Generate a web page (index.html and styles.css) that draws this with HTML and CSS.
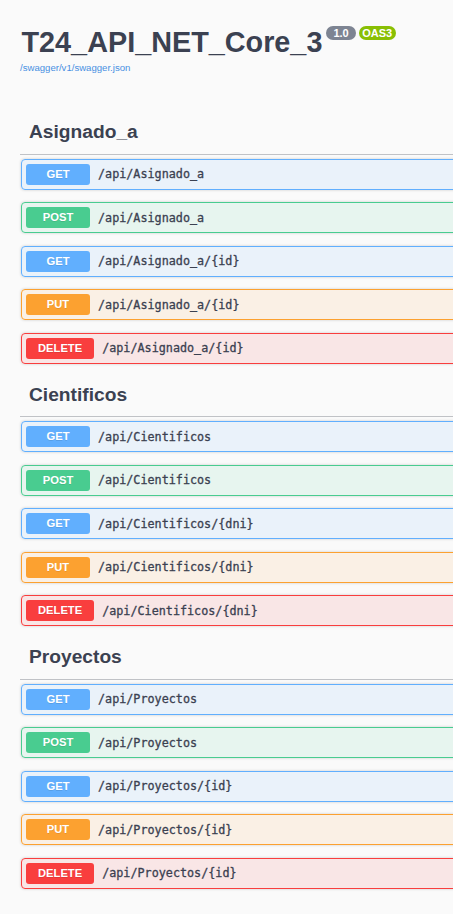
FILE: index.html
```html
<!DOCTYPE html>
<html lang="es">
<head>
<meta charset="utf-8">
<title>Swagger UI</title>
<link rel="stylesheet" href="styles.css">
</head>
<body>
<div class="wrapper">
  <div class="info">
    <h2 class="title">
      <span class="title-text">T24_API_NET_Core_3</span>
      <span class="pill pill-version">1.0</span>
      <span class="pill pill-oas">OAS3</span>
    </h2>
    <a class="url" href="#">/swagger/v1/swagger.json</a>
  </div>

  <section class="tag-section">
    <h3 class="tag">Asignado_a</h3>
    <div class="opblock get"><span class="method">GET</span><span class="path">/api/Asignado_a</span></div>
    <div class="opblock post"><span class="method">POST</span><span class="path">/api/Asignado_a</span></div>
    <div class="opblock get"><span class="method">GET</span><span class="path">/api/Asignado_a/{id}</span></div>
    <div class="opblock put"><span class="method">PUT</span><span class="path">/api/Asignado_a/{id}</span></div>
    <div class="opblock delete"><span class="method">DELETE</span><span class="path">/api/Asignado_a/{id}</span></div>
  </section>

  <section class="tag-section">
    <h3 class="tag">Cientificos</h3>
    <div class="opblock get"><span class="method">GET</span><span class="path">/api/Cientificos</span></div>
    <div class="opblock post"><span class="method">POST</span><span class="path">/api/Cientificos</span></div>
    <div class="opblock get"><span class="method">GET</span><span class="path">/api/Cientificos/{dni}</span></div>
    <div class="opblock put"><span class="method">PUT</span><span class="path">/api/Cientificos/{dni}</span></div>
    <div class="opblock delete"><span class="method">DELETE</span><span class="path">/api/Cientificos/{dni}</span></div>
  </section>

  <section class="tag-section">
    <h3 class="tag">Proyectos</h3>
    <div class="opblock get"><span class="method">GET</span><span class="path">/api/Proyectos</span></div>
    <div class="opblock post"><span class="method">POST</span><span class="path">/api/Proyectos</span></div>
    <div class="opblock get"><span class="method">GET</span><span class="path">/api/Proyectos/{id}</span></div>
    <div class="opblock put"><span class="method">PUT</span><span class="path">/api/Proyectos/{id}</span></div>
    <div class="opblock delete"><span class="method">DELETE</span><span class="path">/api/Proyectos/{id}</span></div>
  </section>
</div>
</body>
</html>
```

FILE: styles.css
```css
html, body {
  margin: 0;
  padding: 0;
  background: #fafafa;
  overflow: hidden;
}

body {
  font-family: "Liberation Sans", Arial, sans-serif;
  color: #3b4151;
}

.wrapper {
  width: 520px;
  padding: 0 0 0 20px;
}

.info {
  padding-top: 25px;
}

.title {
  display: flex;
  align-items: flex-start;
  margin: 0;
  padding-left: 1.5px;
  font-size: 28.8px;
  line-height: 34px;
  font-weight: bold;
  color: #3b4151;
}

.pill {
  display: inline-block;
  margin-top: 1px;
  height: 14px;
  line-height: 14px;
  border-radius: 46px;
  font-size: 11px;
  font-weight: bold;
  color: #fff;
}

.pill-version {
  margin-left: 4px;
  padding: 0 7px;
  background: #7d8492;
}

.pill-oas {
  margin-left: 3px;
  padding: 0 3.5px;
  background: #89bf04;
}

.url {
  display: block;
  margin-top: 2.7px;
  font-size: 9.6px;
  line-height: 12px;
  color: #4990e2;
  text-decoration: none;
}

.tag-section:first-of-type {
  margin-top: 40.3px;
}

.tag {
  margin: 0 0 4px 0;
  padding: 6.5px 16px 9.5px 9px;
  font-size: 19.2px;
  line-height: 24px;
  font-weight: bold;
  color: #3b4151;
  border-bottom: 1px solid rgba(59, 65, 81, 0.3);
}

.opblock {
  display: flex;
  align-items: center;
  margin: 0 0 12.5px 1px;
  padding: 4px;
  border: 1px solid #000;
  border-radius: 4px;
  box-shadow: 0 0 3px rgba(0, 0, 0, 0.19);
}

.method {
  box-sizing: border-box;
  min-width: 64px;
  height: 21px;
  line-height: 21px;
  padding: 0 12px;
  border-radius: 3px;
  text-align: center;
  font-size: 11.2px;
  font-weight: bold;
  color: #fff;
  text-shadow: 0 1px 0 rgba(0, 0, 0, 0.1);
}

.path {
  padding: 0 8px;
  font-family: "DejaVu Sans Mono", "Liberation Mono", monospace;
  font-size: 11.75px;
  font-weight: normal;
  -webkit-text-stroke: 0.3px currentColor;
  color: #3b4151;
}

.get {
  border-color: #61affe;
  background: rgba(97, 175, 254, 0.1);
}
.get .method { background: #61affe; }

.post {
  border-color: #49cc90;
  background: rgba(73, 204, 144, 0.1);
}
.post .method { background: #49cc90; }

.put {
  border-color: #fca130;
  background: rgba(252, 161, 48, 0.1);
}
.put .method { background: #fca130; }

.delete {
  border-color: #f93e3e;
  background: rgba(249, 62, 62, 0.1);
}
.delete .method { background: #f93e3e; }
```
